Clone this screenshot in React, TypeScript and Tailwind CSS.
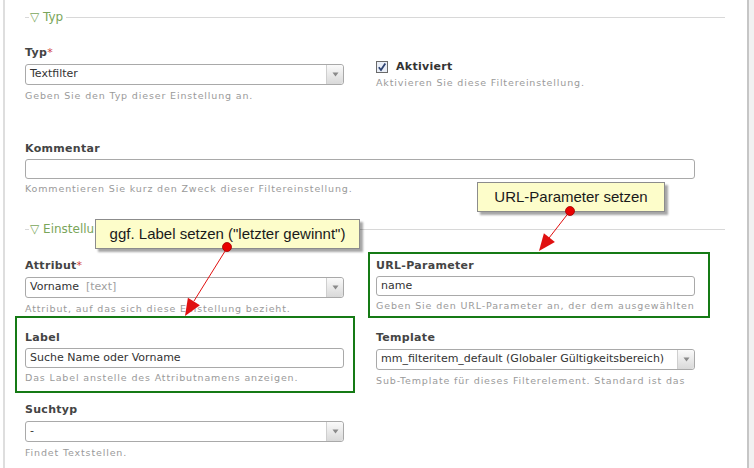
import React from "react";

const form = { fontFamily: '"DejaVu Sans", Verdana, sans-serif' };
const callFont = { fontFamily: '"Liberation Sans", Arial, sans-serif' };

function Legend({ text }: { text: string }) {
  return (
    <div className="flex items-center h-[16px] w-[700px]">
      <div className="w-[4px] h-px bg-[#d8d8d8]" />
      <span className="pl-[1px] pr-[3px] text-[12px] leading-none text-[#7aa55a]">▽ {text}</span>
      <div className="flex-1 h-px bg-[#d8d8d8]" />
    </div>
  );
}

function Label({ text, req, h }: { text: string; req?: boolean; h: string }) {
  return (
    <div className={`${h} flex items-center font-bold text-[11px] tracking-[0.3px] text-[#444]`}>
      {text}
      {req && <span className="text-[#d04040] font-normal">*</span>}
    </div>
  );
}

function Help({ text, h }: { text: string; h: string }) {
  return (
    <div className={`${h} flex items-center whitespace-nowrap text-[9.5px] tracking-[0.85px] text-[#9a9a9a]`}>
      {text}
    </div>
  );
}

function Arrow() {
  return (
    <svg width="7" height="5" viewBox="0 0 7 5">
      <path d="M0.5 0.5 L6.5 0.5 L3.5 4.5 Z" fill="#8a8a8a" />
    </svg>
  );
}

function SelectWidget({
  label,
  req,
  value,
  extra,
  help,
}: {
  label: string;
  req?: boolean;
  value: string;
  extra?: string;
  help: string;
}) {
  return (
    <div className="h-[72px]">
      <Label text={label} req={req} h="h-[21px]" />
      <div className="h-[21px] flex border border-[#a9a9a9] rounded-[3px] bg-white">
        <div className="flex-1 flex items-center px-[4px] text-[11px] text-[#333] whitespace-nowrap overflow-hidden">
          {value}
          {extra && <span className="ml-[7px] text-[#a0a0a0]">{extra}</span>}
        </div>
        <div className="w-[17px] border-l border-[#cfcfcf] bg-gradient-to-b from-[#fafafa] to-[#d9d9d9] rounded-r-[3px] flex items-center justify-center">
          <Arrow />
        </div>
      </div>
      <Help text={help} h="h-[22px]" />
    </div>
  );
}

function TextWidget({ label, value, help }: { label: string; value: string; help: string }) {
  return (
    <div className="h-[72px]">
      <Label text={label} h="h-[20px]" />
      <div className="h-[20px] flex items-center px-[4px] border border-[#a9a9a9] rounded-[3px] bg-white text-[11px] text-[#333]">
        {value}
      </div>
      <Help text={help} h="h-[20px]" />
    </div>
  );
}

function Callout({ text, className }: { text: string; className: string }) {
  return (
    <div
      className={`absolute ${className} flex items-center justify-center bg-[#fdfdca] border border-[#8c8c8c] shadow-[3px_3px_2px_rgba(0,0,0,0.35)] text-[15px] text-[#1a1a1a]`}
      style={callFont}
    >
      {text}
    </div>
  );
}

export default function App() {
  return (
    <div className="relative w-[754px] h-[468px] overflow-hidden bg-white flex" style={form}>
      <div className="w-[3px]" />
      <div className="w-[2px] bg-[#dedede]" />
      <div className="flex-1 pl-[20px] pt-[9px]">
        <Legend text="Typ" />
        <div className="mt-[18px] grid grid-cols-[319px_319px] gap-x-[32px]">
          <SelectWidget label="Typ" req value="Textfilter" help="Geben Sie den Typ dieser Einstellung an." />
          <div className="pt-[18px]">
            <div className="h-[12px] flex items-center gap-[8px]">
              <svg width="12" height="12" viewBox="0 0 12 12">
                <rect x="0.5" y="0.5" width="11" height="11" fill="#e9eef7" stroke="#6a6a6a" />
                <path d="M2.8 6.2 L5 9 L9.3 2.6" fill="none" stroke="#2e4372" strokeWidth="1.8" />
              </svg>
              <span className="font-bold text-[11px] tracking-[0.3px] text-[#333]">Aktiviert</span>
            </div>
            <Help text="Aktivieren Sie diese Filtereinstellung." h="h-[20px]" />
          </div>
        </div>
        <div className="mt-[24px] w-[670px]">
          <TextWidget label="Kommentar" value="" help="Kommentieren Sie kurz den Zweck dieser Filtereinstellung." />
        </div>
        <div className="mt-[10px]">
          <Legend text="Einstellungen" />
        </div>
        <div className="mt-[19px] grid grid-cols-[319px_319px] gap-x-[32px]">
          <div>
            <SelectWidget
              label="Attribut"
              req
              value="Vorname"
              extra="[text]"
              help="Attribut, auf das sich diese Einstellung bezieht."
            />
            <div className="relative">
              <TextWidget label="Label" value="Suche Name oder Vorname" help="Das Label anstelle des Attributnamens anzeigen." />
              <div className="absolute top-[-12px] left-[-10px] right-[-11px] bottom-[7px] border-2 border-[#157a15]" />
            </div>
            <SelectWidget label="Suchtyp" value="-" help="Findet Textstellen." />
          </div>
          <div>
            <div className="relative">
              <TextWidget
                label="URL-Parameter"
                value="name"
                help="Geben Sie den URL-Parameter an, der dem ausgewählten"
              />
              <div className="absolute top-[-4px] left-[-8px] right-[-15px] bottom-[10px] border-2 border-[#157a15]" />
            </div>
            <SelectWidget
              label="Template"
              value="mm_filteritem_default (Globaler Gültigkeitsbereich)"
              help="Sub-Template für dieses Filterelement. Standard ist das"
            />
          </div>
        </div>
      </div>
      <div className="w-[2px] bg-[#c6c6c6]" />
      <div className="w-[5px] bg-[#f1f1f1]" />

      <Callout text={'ggf. Label setzen ("letzter gewinnt")'} className="left-[95px] top-[219px] w-[265px] h-[30px]" />
      <Callout text="URL-Parameter setzen" className="left-[477px] top-[182px] w-[188px] h-[30px]" />

      <svg className="absolute left-0 top-0 pointer-events-none" width="754" height="468" viewBox="0 0 754 468">
        <line x1="227" y1="248" x2="194" y2="301" stroke="#e01010" strokeWidth="1" />
        <polygon points="185,316 199.9,305.2 187.9,297.8" fill="#e01010" />
        <circle cx="227" cy="247" r="4.5" fill="#e80000" stroke="#a00000" strokeWidth="0.8" />
        <line x1="570" y1="211" x2="549" y2="238" stroke="#e01010" strokeWidth="1" />
        <polygon points="539,251 554.9,241.9 543.9,233.3" fill="#e01010" />
        <circle cx="570" cy="211" r="4.5" fill="#e80000" stroke="#a00000" strokeWidth="0.8" />
      </svg>
    </div>
  );
}
